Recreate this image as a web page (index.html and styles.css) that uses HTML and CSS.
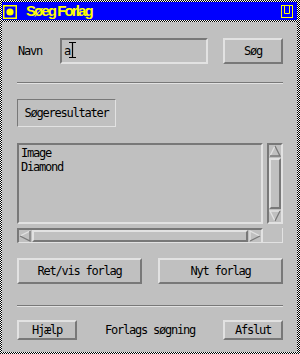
FILE: index.html
```
<!DOCTYPE html>
<html>
<head>
<meta charset="utf-8">
<link rel="stylesheet" href="styles.css">
</head>
<body>
<div class="titlebar">
  <svg class="ticon" width="14" height="14" viewBox="0 0 14 14"><rect x="0.75" y="0.75" width="12.5" height="12.5" fill="none" stroke="#ff0" stroke-width="1.5"/><circle cx="7" cy="7" r="3.6" fill="#ff0"/></svg>
  <span class="title">Søeg Forlag</span>
  <svg class="maxicon" width="12" height="13" viewBox="0 0 12 13"><rect x="0.5" y="0.5" width="11" height="12" fill="none" stroke="#ff0"/><path d="M3.5 1 V8.5 H8.5 V1" fill="none" stroke="#ff0"/></svg>
</div>
<div class="content">
  <div class="row search">
    <span class="lbl">Navn</span>
    <div class="field"><span class="val">a</span><svg class="ibeam" width="7" height="16" viewBox="0 0 7 16"><path d="M0 0.5 H7 M0 15.5 H7 M3.5 0 V16" stroke="#000" stroke-width="1.2" fill="none"/></svg></div>
    <div class="btn btn-sog">Søg</div>
  </div>
  <div class="sep sep1"></div>
  <div class="btn-etched">Søgeresultater</div>
  <div class="scrolled">
    <div class="list-row">
      <div class="list">Image<br>Diamond</div>
      <div class="vscroll">
        <svg class="arrow" width="12" height="12" viewBox="0 0 12 12"><polygon points="6,1 11,11 1,11" fill="#c0c0c0"/><path d="M1 11 L6 1" stroke="#e2e2e2" stroke-width="1.3" fill="none"/><path d="M6 1 L11 11 L1 11" stroke="#787878" stroke-width="1.3" fill="none"/></svg>
        <div class="vslider"></div>
        <svg class="arrow" width="12" height="12" viewBox="0 0 12 12"><polygon points="1,1 11,1 6,11" fill="#c0c0c0"/><path d="M6 11 L1 1 L11 1" stroke="#e2e2e2" stroke-width="1.3" fill="none"/><path d="M11 1 L6 11" stroke="#787878" stroke-width="1.3" fill="none"/></svg>
      </div>
    </div>
    <div class="hrow">
      <div class="hscroll">
        <svg class="arrow" width="12" height="12" viewBox="0 0 12 12"><polygon points="1,6 11,1 11,11" fill="#c0c0c0"/><path d="M11 1 L1 6" stroke="#e2e2e2" stroke-width="1.3" fill="none"/><path d="M1 6 L11 11 L11 1" stroke="#787878" stroke-width="1.3" fill="none"/></svg>
        <div class="hslider"></div>
        <svg class="arrow" width="12" height="12" viewBox="0 0 12 12"><polygon points="1,1 11,6 1,11" fill="#c0c0c0"/><path d="M1 11 L1 1 L11 6" stroke="#e2e2e2" stroke-width="1.3" fill="none"/><path d="M11 6 L1 11" stroke="#787878" stroke-width="1.3" fill="none"/></svg>
      </div>
      <div class="corner"></div>
    </div>
  </div>
  <div class="row two">
    <div class="btn btn-wide">Ret/vis forlag</div>
    <div class="btn btn-wide">Nyt forlag</div>
  </div>
  <div class="sep sep2"></div>
  <div class="row bottom">
    <div class="btn btn-small">Hjælp</div>
    <span class="status">Forlags søgning</span>
    <div class="btn btn-small">Afslut</div>
  </div>
</div>
</body>
</html>
```
FILE: styles.css
```
html, body {
  margin: 0;
  padding: 0;
}
body {
  width: 300px;
  height: 354px;
  box-sizing: border-box;
  padding: 2px 3px 2px 2px;
  display: flex;
  flex-direction: column;
  gap: 2px;
  background-color: #fff;
  background-image: repeating-conic-gradient(#000 0 25%, #fff 0 50%);
  background-size: 2px 2px;
  font-family: "DejaVu Sans Mono", monospace;
  font-size: 12px;
  letter-spacing: -1.22px;
  color: #000;
  overflow: hidden;
}
.titlebar {
  height: 18px;
  flex: none;
  background: #0000ff;
  display: flex;
  align-items: center;
  padding-left: 1px;
  padding-right: 4px;
}
.ticon { display: block; margin-top: 1px; }
.title {
  margin-left: 9px;
  font-family: "Liberation Sans", Arial, sans-serif;
  font-weight: bold;
  font-size: 15px;
  letter-spacing: -1.9px;
  color: #ffff00;
  line-height: 18px;
}
.maxicon { margin-left: auto; display: block; margin-top: 1px; }
.content {
  flex: 1;
  background: #c0c0c0;
  padding: 16px 14px 0 15px;
  display: flex;
  flex-direction: column;
}
.row {
  display: flex;
  align-items: center;
}
.search { height: 26px; }
.lbl {
  width: 42px;
  padding-left: 1px;
}
.field {
  position: relative;
  width: 148px;
  height: 26px;
  box-sizing: border-box;
  border: 2px solid;
  border-color: #787878 #e2e2e2 #e2e2e2 #787878;
  display: flex;
  align-items: center;
  padding-left: 2px;
}
.ibeam {
  position: absolute;
  left: 7px;
  top: 2px;
}
.btn {
  box-sizing: border-box;
  border: 2px solid;
  border-color: #e2e2e2 #787878 #787878 #e2e2e2;
  display: flex;
  align-items: center;
  justify-content: center;
}
.btn-sog {
  margin-left: auto;
  width: 60px;
  height: 26px;
}
.sep {
  height: 2px;
  box-sizing: border-box;
  border-top: 1px solid #787878;
  border-bottom: 1px solid #e2e2e2;
}
.sep1 { margin-top: 18px; }
.btn-etched {
  margin-top: 15px;
  width: 99px;
  height: 28px;
  box-sizing: border-box;
  border: 1px solid;
  border-color: #787878 #e2e2e2 #e2e2e2 #787878;
  display: flex;
  align-items: center;
  justify-content: center;
}
.scrolled {
  margin-top: 16px;
  height: 100px;
  display: flex;
  flex-direction: column;
}
.list-row {
  height: 81px;
  display: flex;
}
.list {
  width: 246px;
  box-sizing: border-box;
  border: 2px solid;
  border-color: #787878 #e2e2e2 #e2e2e2 #787878;
  padding: 1px 2px;
  line-height: 14px;
  color: #000;
}
.vscroll {
  margin-left: 4px;
  width: 16px;
  box-sizing: border-box;
  border: 2px solid;
  border-color: #787878 #e2e2e2 #e2e2e2 #787878;
  display: flex;
  flex-direction: column;
  align-items: center;
}
.arrow { display: block; flex: none; }
.vslider {
  flex: 1;
  width: 12px;
  box-sizing: border-box;
  border: 2px solid;
  border-color: #e2e2e2 #787878 #787878 #e2e2e2;
  margin: 1px 0;
}
.hrow {
  margin-top: 4px;
  height: 15px;
  display: flex;
}
.hscroll {
  width: 246px;
  box-sizing: border-box;
  border: 2px solid;
  border-color: #787878 #e2e2e2 #e2e2e2 #787878;
  border-bottom-width: 1px;
  display: flex;
  align-items: center;
}
.hslider {
  flex: 1;
  height: 12px;
  box-sizing: border-box;
  border: 2px solid;
  border-color: #e2e2e2 #787878 #787878 #e2e2e2;
  margin: 0 1px;
}
.corner {
  flex: 1;
  box-sizing: border-box;
  border-right: 1px solid #e2e2e2;
  border-bottom: 1px solid #e2e2e2;
}
.two {
  margin-top: 15px;
  justify-content: space-between;
}
.btn-wide {
  width: 125px;
  height: 26px;
}
.sep2 { margin-top: 21px; }
.bottom {
  margin-top: 13px;
  justify-content: space-between;
}
.btn-small {
  width: 60px;
  height: 20px;
}
```
